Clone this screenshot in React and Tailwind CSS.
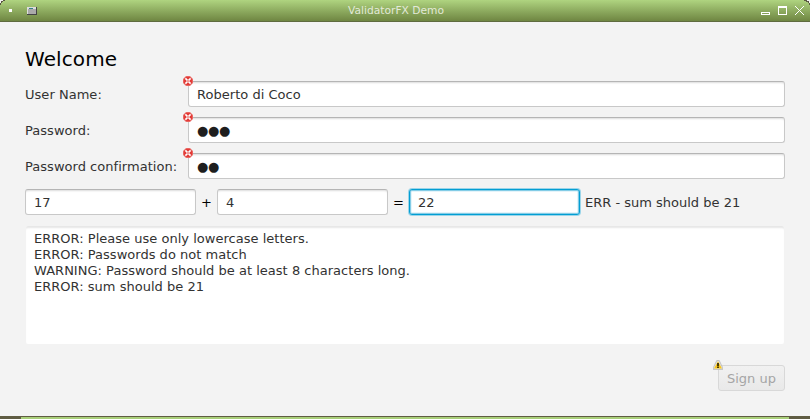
import React from "react";

const fieldBase =
  "block h-[26px] rounded-[3px] border px-2 text-[13px] leading-[26px] tracking-[0.03px] text-[#323232] whitespace-pre bg-white";
const fieldNormal =
  "border-[#c8c8c8] border-t-[#b5b5b5] shadow-[inset_0_2px_2px_-1px_#dcdcdc]";

function ErrorIcon() {
  return (
    <svg className="absolute -left-[5px] -top-[5px]" width="10" height="10" viewBox="0 0 10 10">
      <path d="M3 0h4l3 3v4l-3 3H3L0 7V3z" fill="#ea6f6b" />
      <circle cx="5" cy="5" r="4.3" fill="#e23b37" />
      <path d="M2.4 2.4l5.2 5.2M7.6 2.4L2.4 7.6" stroke="#fff" strokeWidth="1.5" />
      <path d="M4 4h2v2H4z" fill="#f0a09d" />
    </svg>
  );
}

function WarningIcon() {
  return (
    <svg className="absolute -left-[5px] -top-[5px]" width="10" height="10" viewBox="0 0 10 10">
      <path d="M3.8 .4h2.4L9.6 7.6v2H.4v-2z" fill="#e4e4e4" stroke="#b8b8b8" strokeWidth=".8" />
      <path d="M5 1.2L9 8.6H1z" fill="#f8c51b" />
      <path d="M5 3v3.4M5 6.9v1.2" stroke="#3a2d00" strokeWidth="1.8" />
    </svg>
  );
}

function FormRow({ label, value, secret }) {
  return (
    <div className="flex h-[26px] items-center">
      <label className="w-[163px] whitespace-nowrap pt-[2px] text-[13px] leading-6 tracking-[0.03px] text-[#323232]">{label}</label>
      <div className="relative w-[597px]">
        <div className={`${fieldBase} ${fieldNormal}`}>
          {secret ? <span className="tracking-[-0.3px] text-[#1e1e1e]">{value}</span> : value}
        </div>
        <ErrorIcon />
      </div>
    </div>
  );
}

const messages = [
  "ERROR: Please use only lowercase letters.",
  "ERROR: Passwords do not match",
  "WARNING: Password should be at least 8 characters long.",
  "ERROR: sum should be 21",
];

export default function App() {
  return (
    <div className="flex h-[419px] w-[810px] flex-col overflow-hidden bg-[#f3f3f3] font-['DejaVu_Sans',sans-serif]">
      <header className="relative flex h-[22px] shrink-0 items-start border-b border-[#5f6b3f] bg-linear-to-b from-[#afd480] to-[#6f8642]">
        <svg className="absolute inset-0" width="810" height="21" shapeRendering="crispEdges">
          <path d="M0 0h5v1H3v1H2v1H1v2H0zM810 0h-6v1h2v1h2v1h1v2h1z" fill="#5b5843" />
          <path d="M0 0h3v1H1v2H0zM810 0h-3v1h2v2h1z" fill="#f3f3f3" />
          <path d="M9 9h3v3H9z" fill="#fff" />
          <path d="M27 7h10v8H27z" fill="#444" />
          <path d="M27 7h9v7h-9z" fill="#ddd" />
          <path d="M28 9h8v5h-8z" fill="#aaa" />
          <path d="M29 8h4v1h-4z" fill="#338085" />
          <path d="M761.5 12.5h8v2h-8z" fill="none" stroke="#fff" />
          <path d="M778 6h9v9h-9zM779 8v6h7V8z" fill="#fff" fillRule="evenodd" />
          <path d="M795 6l9 9M804 6l-9 9" stroke="#fff" shapeRendering="auto" />
        </svg>
        <h1 className="w-[792px] pt-px text-center text-[10.7px] leading-5 text-[#e2e9d8]">ValidatorFX Demo</h1>
      </header>
      <main className="flex h-[394px] shrink-0 flex-col px-[25px] pt-[25px]">
        <h2 className="h-[34px] text-[20px] leading-6 tracking-[0.1px] text-black">Welcome</h2>
        <div className="flex flex-col gap-[10px]">
          <FormRow label="User Name:" value="Roberto di Coco" />
          <FormRow label="Password:" value="●●●" secret />
          <FormRow label="Password confirmation:" value="●●" secret />
        </div>
        <div className="mt-[10px] flex h-[26px] items-center text-[13px] leading-6">
          <div className={`${fieldBase} ${fieldNormal} w-[171px]`}>17</div>
          <span className="w-[21px] pt-[2px] text-center text-black">+</span>
          <div className={`${fieldBase} ${fieldNormal} w-[171px]`}>4</div>
          <span className="w-[21px] pt-[2px] text-center text-black">=</span>
          <div className={`${fieldBase} w-[171px] border-[#039ed3] shadow-[0_0_0_1px_#9bd5e9,inset_0_0_0_1px_#83cce6,inset_0_0_0_2px_#e5f4fa]`}>22</div>
          <span className="ml-[5px] pt-[2px] text-[#323232]">ERR - sum should be 21</span>
        </div>
        <div className="mx-px mt-[11px] h-[118px] rounded-[2px] bg-white px-2 pt-[5px] text-[13px] leading-4 tracking-[0.02px] text-[#323232] shadow-[inset_0_3px_2px_-1px_#e6e6e6]">
          {messages.map((message) => (
            <p key={message}>{message}</p>
          ))}
        </div>
        <div className="mt-[21px] flex justify-end">
          <div className="relative">
            <button
              disabled
              className="block h-[26px] w-[67px] rounded-[3px] border border-[#d8d8d8] bg-linear-to-b from-[#f1f1f1] to-[#e9e9e9] pt-[2px] text-[13px] leading-[22px] text-[#a5a5a5]"
            >
              Sign up
            </button>
            <WarningIcon />
          </div>
        </div>
      </main>
      <footer className="h-[3px] shrink-0 border-t border-[#5f5c43] bg-[#5f5c43] px-[21px]">
        <div className="h-[2px] bg-[#a9cf7a]" />
      </footer>
    </div>
  );
}
